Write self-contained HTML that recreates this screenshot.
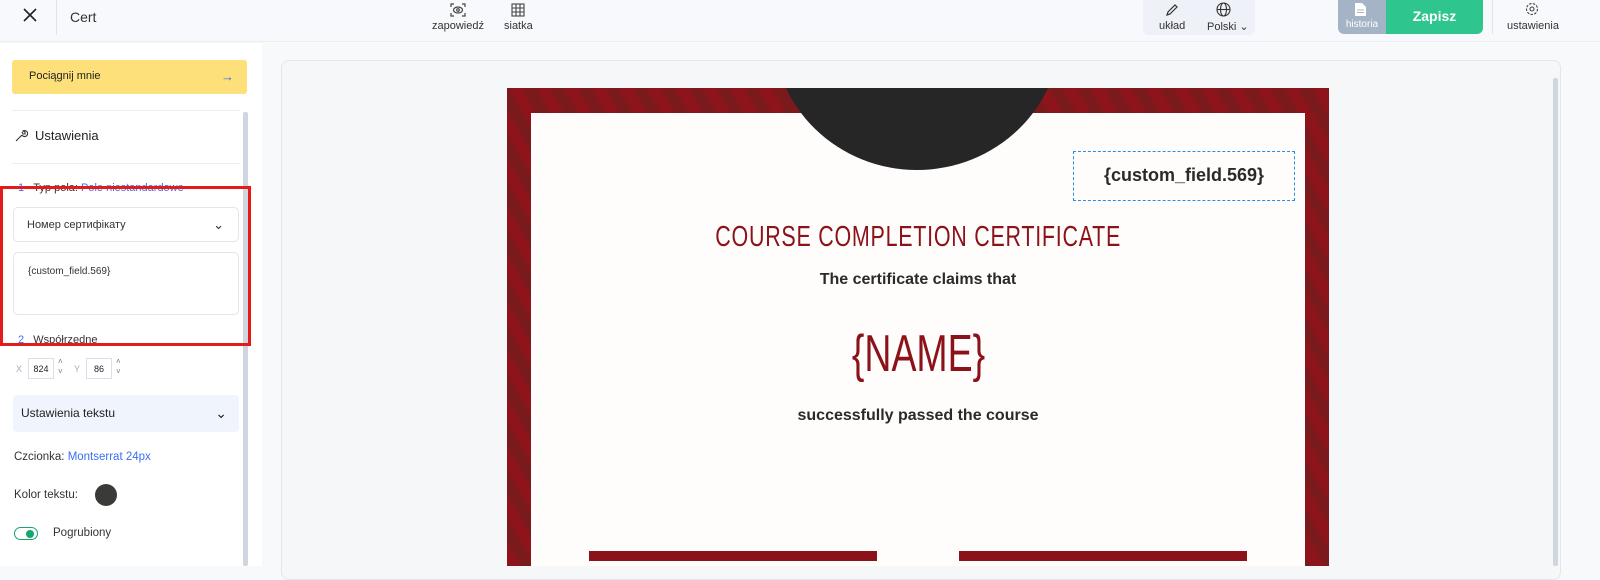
<!DOCTYPE html>
<html><head><meta charset="utf-8"><style>
*{box-sizing:border-box;margin:0;padding:0}
body{width:1600px;height:566px;overflow:hidden;background:#f8f9fb;font-family:"Liberation Sans",sans-serif;color:#222;position:relative}
.a{position:absolute}
.top{left:0;top:0;width:1600px;height:42px;background:#f8f9fc;border-bottom:1px solid #eceef2}
.lbl{font-size:11px;color:#333;text-align:center}
.sq{display:inline-block;transform:scaleX(0.74);transform-origin:center}
</style></head><body>
<div class="a top"></div>
<svg class="a" style="left:23px;top:8px" width="14" height="14" viewBox="0 0 14 14" stroke="#222" stroke-width="1.6"><path d="M1 1l12 12M13 1L1 13"/></svg>
<div class="a" style="left:56px;top:0;width:1px;height:35px;background:#e2e4e8"></div>
<div class="a" style="left:70px;top:9px;font-size:14px;color:#333">Cert</div>
<svg class="a" style="left:450px;top:3px" width="16" height="14" viewBox="0 0 16 14" fill="none" stroke="#444" stroke-width="1.2"><path d="M1 4V1h3M12 1h3v3M15 10v3h-3M4 13H1v-3"/><ellipse cx="8" cy="7" rx="4.5" ry="3"/><circle cx="8" cy="7" r="1.3"/></svg>
<div class="a lbl" style="left:432px;top:20px">zapowiedź</div>
<svg class="a" style="left:511px;top:3px" width="14" height="14" viewBox="0 0 14 14" fill="none" stroke="#444" stroke-width="1.1"><rect x="1" y="1" width="12" height="12"/><path d="M5 1v12M9 1v12M1 5h12M1 9h12"/></svg>
<div class="a lbl" style="left:504px;top:20px">siatka</div>
<div class="a" style="left:1143px;top:0;width:112px;height:35px;background:#eef1f7;border-radius:0 0 6px 6px"></div>
<svg class="a" style="left:1165px;top:3px" width="14" height="14" viewBox="0 0 14 14" fill="none" stroke="#333" stroke-width="1.2"><path d="M2 12l1-3 7-7 2 2-7 7z"/></svg>
<div class="a lbl" style="left:1159px;top:20px">układ</div>
<svg class="a" style="left:1216px;top:2px" width="15" height="15" viewBox="0 0 15 15" fill="none" stroke="#333" stroke-width="1.1"><circle cx="7.5" cy="7.5" r="6.5"/><ellipse cx="7.5" cy="7.5" rx="3" ry="6.5"/><path d="M1 7.5h13"/></svg>
<div class="a lbl" style="left:1207px;top:20px">Polski ⌄</div>
<div class="a" style="left:1338px;top:0;width:48px;height:34px;background:#a4b4c6;border-radius:0 0 0 6px"></div>
<svg class="a" style="left:1355px;top:3px" width="11" height="13" viewBox="0 0 11 13" fill="#fff"><path d="M0 0h7l4 4v9H0z"/><path d="M2 7h7M2 9.5h7" stroke="#a4b4c6"/></svg>
<div class="a" style="left:1338px;top:19px;width:48px;font-size:10px;color:#fff;text-align:center">historia</div>
<div class="a" style="left:1386px;top:0;width:97px;height:34px;background:#2ec68e;border-radius:0 0 6px 0;color:#fff;font-weight:bold;font-size:14px;text-align:center;line-height:33px">Zapisz</div>
<div class="a" style="left:1492px;top:0;width:1px;height:34px;background:#e2e4e8"></div>
<svg class="a" style="left:1525px;top:2px" width="14" height="14" viewBox="0 0 14 14" fill="none" stroke="#444" stroke-width="1.1"><circle cx="7" cy="7" r="2"/><circle cx="7" cy="7" r="5.5" stroke-dasharray="2.5 1.3"/></svg>
<div class="a lbl" style="left:1507px;top:20px">ustawienia</div>

<div class="a" style="left:0;top:43px;width:262px;height:523px;background:#fff"></div>
<div class="a" style="left:12px;top:60px;width:235px;height:34px;background:#fde07a;border-radius:3px;font-size:11px;line-height:33px;padding-left:17px;color:#222">Pociągnij mnie<span style="position:absolute;right:13px;color:#3b6ef0;font-size:13px">→</span></div>
<div class="a" style="left:12px;top:110px;width:228px;height:1px;background:#eceef2"></div>
<div class="a" style="left:243px;top:112px;width:5px;height:454px;background:#cfd6e0;border-radius:2px"></div>
<svg class="a" style="left:15px;top:129px" width="13" height="13" viewBox="0 0 13 13" fill="none" stroke="#333" stroke-width="1.1"><path d="M1 12l6-6M7 6a3 3 0 1 0 1-4l2 1 0 2-2 0-1-2"/></svg>
<div class="a" style="left:35px;top:128px;font-size:13px;color:#222">Ustawienia</div>
<div class="a" style="left:12px;top:163px;width:228px;height:1px;background:#eceef2"></div>
<div class="a" style="left:18px;top:182px;font-size:11px;color:#333"><span style="color:#3b6ef0">1</span>&nbsp;&nbsp;&nbsp;Typ pola: <span style="color:#3b6ef0">Pole niestandardowe</span></div>
<div class="a" style="left:13px;top:207px;width:226px;height:35px;border:1px solid #e2e5ea;border-radius:5px;font-size:11px;line-height:34px;padding-left:13px;color:#333">Номер сертифікату<span style="position:absolute;right:14px;top:0;font-size:13px">⌄</span></div>
<div class="a" style="left:13px;top:252px;width:226px;height:63px;border:1px solid #e2e5ea;border-radius:5px;font-size:10px;padding:13px 0 0 14px;color:#333">{custom_field.569}</div>
<div class="a" style="left:18px;top:334px;font-size:11px;color:#333"><span style="color:#3b6ef0">2</span>&nbsp;&nbsp;&nbsp;Współrzędne</div>
<div class="a" style="left:0;top:186px;width:251px;height:160px;border:3px solid #e31b1b"></div>
<div class="a" style="left:16px;top:364px;font-size:9px;color:#aab">X</div>
<div class="a" style="left:28px;top:358px;width:26px;height:21px;border:1px solid #dde;font-size:9px;line-height:20px;text-align:center">824</div>
<div class="a" style="left:58px;top:357px;font-size:8px;color:#777;line-height:10px">˄<br>˅</div>
<div class="a" style="left:74px;top:364px;font-size:9px;color:#aab">Y</div>
<div class="a" style="left:86px;top:358px;width:26px;height:21px;border:1px solid #dde;font-size:9px;line-height:20px;text-align:center">86</div>
<div class="a" style="left:116px;top:357px;font-size:8px;color:#777;line-height:10px">˄<br>˅</div>
<div class="a" style="left:13px;top:395px;width:226px;height:37px;background:#eff4fd;border-radius:4px;font-size:12px;line-height:36px;padding-left:8px;color:#222">Ustawienia tekstu<span style="position:absolute;right:12px;top:0;font-size:14px">⌄</span></div>
<div class="a" style="left:14px;top:451px;font-size:11.5px;color:#333">Czcionka: <span style="color:#3b6ef0">Montserrat 24px</span></div>
<div class="a" style="left:14px;top:489px;font-size:11.5px;color:#333">Kolor tekstu:</div>
<div class="a" style="left:95px;top:484px;width:22px;height:22px;border-radius:50%;background:#3a3a38"></div>
<div class="a" style="left:14px;top:527px;width:24px;height:13px;border:1.5px solid #16a56d;border-radius:7px"></div>
<div class="a" style="left:26px;top:530px;width:8px;height:8px;border-radius:50%;background:#16a56d"></div>
<div class="a" style="left:53px;top:527px;font-size:11.5px;color:#333">Pogrubiony</div>

<div class="a" style="left:281px;top:60px;width:1280px;height:520px;background:#f6f7f8;border:1px solid #e3e6ea;border-radius:8px"></div>
<div class="a" style="left:1553px;top:78px;width:5px;height:488px;background:#cfd6e0;border-radius:2px"></div>
<div class="a" style="left:507px;top:88px;width:822px;height:478px;background:repeating-linear-gradient(60deg,#8d141b 0 12px,#7a1a1c 12px 24px);overflow:hidden">
 <div class="a" style="left:24px;top:25px;width:774px;height:460px;background:#fefdfb"></div>
 <div class="a" style="left:266px;top:-150px;width:288px;height:232px;border-radius:0 0 144px 144px / 0 0 140px 140px;background:#262626"></div>
 <div class="a" style="left:566px;top:63px;width:222px;height:50px;border:1.5px dashed #2a8ee0"></div>
 <div class="a" style="left:566px;top:77px;width:222px;text-align:center;font-size:18px;font-weight:bold;color:#2a2a28">{custom_field.569}</div>
 <div class="a" style="left:0;top:133px;width:822px;text-align:center;font-size:29px;letter-spacing:1px;color:#8c1219"><span class="sq">COURSE COMPLETION CERTIFICATE</span></div>
 <div class="a" style="left:0;top:183px;width:822px;text-align:center;font-size:16px;font-weight:bold;color:#2a2a28">The certificate claims that</div>
 <div class="a" style="left:0;top:236px;width:822px;text-align:center;font-size:52px;color:#8c1219"><span class="sq" style="transform:scaleX(0.72)">{NAME}</span></div>
 <div class="a" style="left:0;top:319px;width:822px;text-align:center;font-size:16px;font-weight:bold;color:#2a2a28">successfully passed the course</div>
 <div class="a" style="left:82px;top:463px;width:288px;height:10px;background:#8c1219"></div>
 <div class="a" style="left:452px;top:463px;width:288px;height:10px;background:#8c1219"></div>
</div>
</body></html>
